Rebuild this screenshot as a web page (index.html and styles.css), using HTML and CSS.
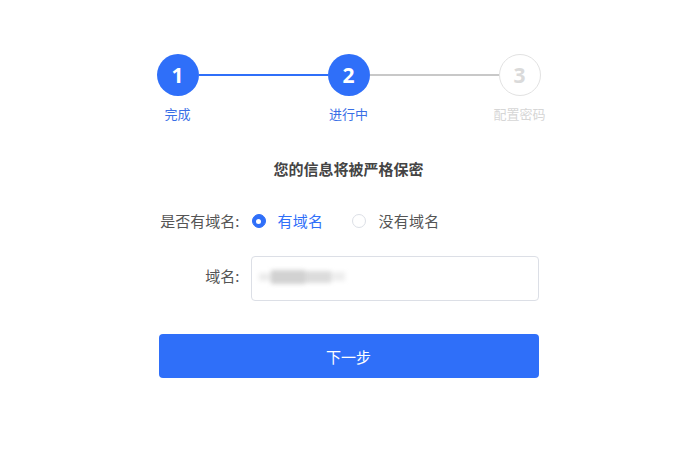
FILE: index.html
```html
<!DOCTYPE html>
<html lang="zh-CN">
<head>
<meta charset="utf-8">
<title>配置</title>
<link rel="stylesheet" href="styles.css">
</head>
<body>
<div class="page">
  <div class="steps">
    <div class="step done">
      <div class="circle">1</div>
      <div class="step-label">完成</div>
    </div>
    <div class="line active"></div>
    <div class="step current">
      <div class="circle">2</div>
      <div class="step-label">进行中</div>
    </div>
    <div class="line"></div>
    <div class="step todo">
      <div class="circle">3</div>
      <div class="step-label">配置密码</div>
    </div>
  </div>

  <div class="title">您的信息将被严格保密</div>

  <div class="form">
    <div class="row radio-row">
      <div class="label">是否有域名:</div>
      <div class="field radios">
        <span class="radio checked"><span class="dot"></span></span>
        <span class="radio-text checked-text">有域名</span>
        <span class="radio"></span>
        <span class="radio-text">没有域名</span>
      </div>
    </div>
    <div class="row input-row">
      <div class="label up">域名:</div>
      <div class="field input">
        <span class="redact">
          <span class="blob b1"></span><span class="blob b2"></span><span class="blob b3"></span><span class="blob b4"></span>
        </span>
      </div>
    </div>
    <button class="next">下一步</button>
  </div>
</div>
</body>
</html>
```

FILE: styles.css
```css
html, body {
  margin: 0;
  padding: 0;
  background: #ffffff;
}
body {
  font-family: "Noto Sans CJK SC", "Noto Sans", sans-serif;
  color: #555;
}
.page {
  display: flex;
  flex-direction: column;
  align-items: center;
  padding-top: 54px;
}
.steps {
  width: 384px;
  display: flex;
  align-items: flex-start;
}
.step {
  width: 42px;
  display: flex;
  flex-direction: column;
  align-items: center;
}
.circle {
  width: 42px;
  height: 42px;
  box-sizing: border-box;
  border-radius: 50%;
  background: #2f6ff9;
  color: #fff;
  font-family: "Open Sans", "DejaVu Sans", sans-serif;
  font-weight: 700;
  font-size: 21px;
  display: flex;
  align-items: center;
  justify-content: center;
}
.todo .circle {
  background: #fff;
  border: 1px solid #e2e2e2;
  color: #dadada;
}
.step-label {
  margin-top: 9px;
  font-size: 13px;
  line-height: 18px;
  white-space: nowrap;
  color: #3a6fe6;
}
.todo .step-label {
  color: #d6d6d6;
}
.line {
  flex: 1;
  height: 2px;
  margin-top: 20px;
  background: #c8c8c8;
}
.line.active {
  background: #2f6ff9;
}
.title {
  margin-top: 36px;
  font-size: 15px;
  line-height: 20px;
  font-weight: 700;
  color: #444;
}
.form {
  width: 380px;
  display: flex;
  flex-direction: column;
  margin-top: 32px;
}
.row {
  display: flex;
  align-items: center;
}
.label {
  width: 81px;
  margin-right: 11px;
  text-align: right;
  font-size: 15px;
  line-height: 20px;
  color: #555;
  white-space: nowrap;
}
.label.up {
  padding-bottom: 5px;
}
.radios {
  display: flex;
  align-items: center;
  font-size: 15px;
  line-height: 20px;
}
.radio {
  width: 14px;
  height: 14px;
  box-sizing: border-box;
  border-radius: 50%;
  border: 1px solid #dcdfe6;
  background: #fff;
  margin-left: 1px;
  display: flex;
  align-items: center;
  justify-content: center;
}
.radio.checked {
  background: #2f6ff9;
  border-color: #2f6ff9;
}
.dot {
  width: 5px;
  height: 5px;
  border-radius: 50%;
  background: #fff;
}
.radio-text {
  margin-left: 12px;
  margin-right: 28px;
  color: #555;
  letter-spacing: 0.3px;
}
.checked-text {
  color: #2f6ff9;
}
.input-row {
  margin-top: 25px;
}
.input {
  flex: 1;
  height: 45px;
  box-sizing: border-box;
  border: 1px solid #dcdfe6;
  border-radius: 4px;
  display: flex;
  align-items: center;
  padding-left: 7px;
  padding-bottom: 4px;
}
.redact {
  display: flex;
  align-items: center;
  filter: blur(2px);
}
.blob {
  display: block;
  height: 14px;
}
.b1 { width: 12px; height: 8px; background: #ececec; }
.b2 { width: 34px; background: #d2d2d2; }
.b3 { width: 26px; background: #dcdcdc; height: 12px; }
.b4 { width: 14px; height: 9px; background: #eeeeee; }
.next {
  margin-top: 33px;
  height: 44px;
  border: none;
  border-radius: 4px;
  background: #2f6ff9;
  color: #fff;
  font-family: "Noto Sans CJK SC", "Noto Sans", sans-serif;
  font-size: 15px;
  cursor: pointer;
}
```
